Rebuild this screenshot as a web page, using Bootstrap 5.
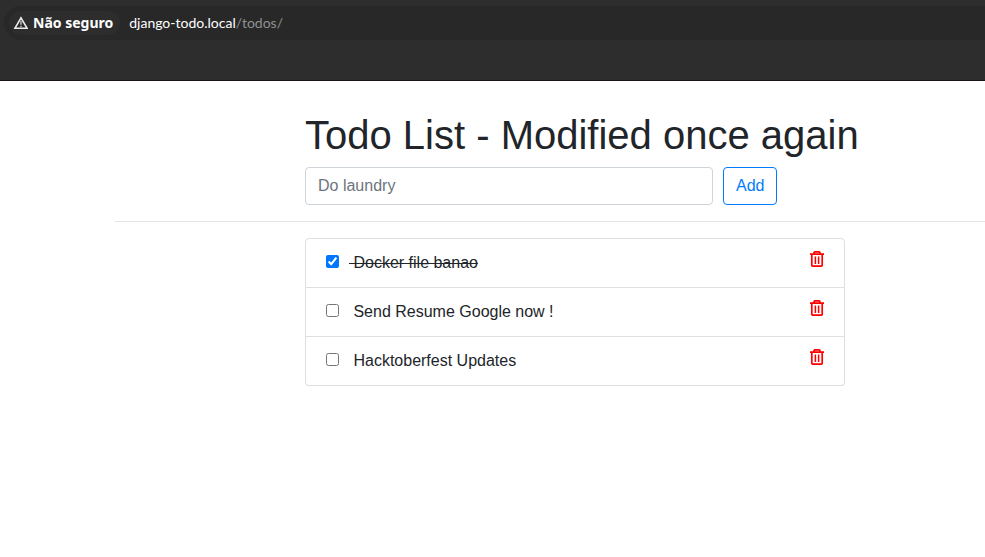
<!DOCTYPE html>
<html lang="pt-BR">
<head>
<meta charset="utf-8">
<meta name="viewport" content="width=device-width, initial-scale=1">
<title>Todo List</title>
<link href="https://cdn.jsdelivr.net/npm/bootstrap@5.3.0/dist/css/bootstrap.min.css" rel="stylesheet">
<style>
  body { font-family: "Liberation Sans", Arial, sans-serif; color: #212529; overflow-x: hidden; }
  .browser-bar { background: #2d2d2d; border-bottom: 1px solid #1b1517; padding: 6px 0 40px 4px; font: 14px/20px Lato, sans-serif; }
  .address { background: #282828; border-radius: 17px 0 0 17px; height: 34px; padding-left: 5px; gap: 9px; }
  .security { background: #2d2d2d; color: #fff; border-radius: 12px; height: 24px; padding: 0 7px 0 4px; gap: 5px; font: bold 14px/20px "Noto Sans", sans-serif; }
  .url { color: #fff; }
  .url-path { color: #909090; }
  .page { padding: 30px 0 0 115px; }
  .page-column { margin-left: 190px; }
  .page h1 { font-size: 40px; line-height: 48px; margin-bottom: 8px; font-weight: 400; }
  .todo-form { gap: 10px; }
  .todo-form .form-control { max-width: 408px; border-color: #ced4da; border-radius: 4px; }
  .todo-form .form-control::placeholder { color: #6c757d; }
  .btn-add { --bs-btn-color: #007bff; --bs-btn-border-color: #007bff; --bs-btn-hover-bg: #007bff; --bs-btn-hover-color: #fff; --bs-btn-border-radius: 4px; }
  .page hr { margin: 16px 0; color: #000; opacity: .1; }
  .todo-list { max-width: 540px; --bs-list-group-border-color: #dfdfdf; --bs-list-group-border-radius: 4px; --bs-list-group-item-padding-x: 20px; --bs-list-group-item-padding-y: 12px; --bs-list-group-color: #212529; }
  .todo-list input { width: 13px; height: 13px; margin: 4px 10px 0 0; accent-color: #0075ff; }
  .todo-list label { white-space: pre; }
  .done { text-decoration: line-through; }
  .btn-trash { color: #f00; height: 17px; }
</style>
<script src="https://cdn.jsdelivr.net/npm/bootstrap@5.3.0/dist/js/bootstrap.bundle.min.js" defer></script>
</head>
<body>
<svg class="d-none" aria-hidden="true">
  <symbol id="trash" viewBox="0 0 14 17">
    <path d="M0 3.2h14M4 2.8V2Q4 .8 5.2 .8h3.6Q10 .8 10 2v.8M1.8 3v11.3q0 .8 .8 .8h8.8q.8 0 .8-.8V3" fill="none" stroke="currentColor" stroke-width="1.7"/>
    <path d="M5.4 5.5v7.5M8.6 5.5v7.5" fill="none" stroke="currentColor" stroke-width="1.5"/>
  </symbol>
</svg>
<header class="browser-bar">
  <div class="address d-flex align-items-center">
    <div class="security d-flex align-items-center">
      <svg width="15" height="14" viewBox="0 0 15 14" aria-hidden="true"><path d="M8 1.8 14 12.2H2Z" fill="none" stroke="#eee" stroke-width="1.6"/><path d="M8 5v3.8M8 9.7v1.4" stroke="#bbb" stroke-width="1.5"/></svg>
      <span>Não seguro</span>
    </div>
    <div class="url">django-todo.local<span class="url-path">/todos/</span></div>
  </div>
</header>
<main class="page">
  <div class="page-column">
    <h1>Todo List - Modified once again</h1>
    <form class="todo-form d-flex">
      <input type="text" class="form-control" placeholder="Do laundry" aria-label="New todo">
      <button type="button" class="btn btn-outline-primary btn-add">Add</button>
    </form>
  </div>
  <hr>
  <div class="page-column">
    <ul class="list-group todo-list">
      <li class="list-group-item d-flex align-items-start">
        <input type="checkbox" id="todo1" checked><label for="todo1" class="done"> Docker file banao</label>
        <button type="button" class="btn-trash btn p-0 border-0 ms-auto d-flex" aria-label="Delete"><svg width="14" height="17"><use href="#trash"/></svg></button>
      </li>
      <li class="list-group-item d-flex align-items-start">
        <input type="checkbox" id="todo2"><label for="todo2"> Send Resume Google now !</label>
        <button type="button" class="btn-trash btn p-0 border-0 ms-auto d-flex" aria-label="Delete"><svg width="14" height="17"><use href="#trash"/></svg></button>
      </li>
      <li class="list-group-item d-flex align-items-start">
        <input type="checkbox" id="todo3"><label for="todo3"> Hacktoberfest Updates</label>
        <button type="button" class="btn-trash btn p-0 border-0 ms-auto d-flex" aria-label="Delete"><svg width="14" height="17"><use href="#trash"/></svg></button>
      </li>
    </ul>
  </div>
</main>
</body>
</html>
